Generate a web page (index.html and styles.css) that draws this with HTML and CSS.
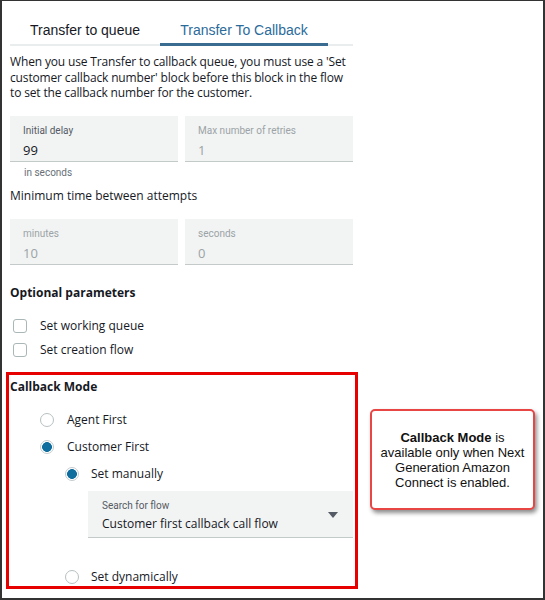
FILE: index.html
```html
<!DOCTYPE html>
<html>
<head>
<meta charset="utf-8">
<link rel="stylesheet" href="styles.css">
</head>
<body>
<div class="frame">
  <div class="panel">
    <div class="tabs">
      <div class="tab tab-queue">Transfer to queue</div>
      <div class="tab tab-callback active">Transfer To Callback</div>
    </div>
    <p class="desc">When you use Transfer to callback queue, you must use a 'Set customer callback number' block before this block in the flow to set the callback number for the customer.</p>

    <div class="row row-first">
      <div class="field">
        <div class="field-label">Initial delay</div>
        <div class="field-value">99</div>
      </div>
      <div class="field disabled">
        <div class="field-label">Max number of retries</div>
        <div class="field-value">1</div>
      </div>
    </div>
    <div class="hint">in seconds</div>

    <div class="subhead">Minimum time between attempts</div>
    <div class="row row-second">
      <div class="field disabled">
        <div class="field-label">minutes</div>
        <div class="field-value">10</div>
      </div>
      <div class="field disabled">
        <div class="field-label">seconds</div>
        <div class="field-value">0</div>
      </div>
    </div>

    <div class="section-title optional">Optional parameters</div>
    <div class="checks">
      <label class="check"><span class="box"></span><span>Set working queue</span></label>
      <label class="check"><span class="box"></span><span>Set creation flow</span></label>
    </div>

    <div class="callback">
      <div class="section-title">Callback Mode</div>
      <div class="radios">
        <div class="radio"><span class="dot"></span><span>Agent First</span></div>
        <div class="radio"><span class="dot on"></span><span>Customer First</span></div>
        <div class="radio nested"><span class="dot on"></span><span>Set manually</span></div>
      </div>
      <div class="select">
        <div class="select-text">
          <div class="field-label">Search for flow</div>
          <div class="select-value">Customer first callback call flow</div>
        </div>
        <svg class="caret" width="10" height="6" viewBox="0 0 10 6"><path d="M0 0 L10 0 L5 6 Z" fill="#545b64"/></svg>
      </div>
      <div class="radio nested last"><span class="dot"></span><span>Set dynamically</span></div>
    </div>
  </div>

  <div class="note">
    <div class="note-text">
      <div><b>Callback Mode</b> is</div>
      <div>available only when Next</div>
      <div>Generation Amazon</div>
      <div>Connect is enabled.</div>
    </div>
  </div>
</div>
</body>
</html>
```

FILE: styles.css
```css
* { box-sizing: border-box; }
html, body { margin: 0; padding: 0; background: #fff; }
body { font-family: "Open Sans", "Noto Sans", sans-serif; color: #16191f; }

.frame {
  position: relative;
  width: 545px;
  height: 600px;
  border: 2px solid #333;
  border-top-width: 1px;
  background: #fff;
  overflow: hidden;
}

.panel {
  margin-left: 8px;
  width: 343px;
}

.tabs {
  display: flex;
  margin-top: 15px;
  border-bottom: 2px solid #eaeded;
}
.tab {
  font-family: "Liberation Sans", Arial, sans-serif;
  font-size: 14px;
  line-height: 18px;
  padding: 5px 0 4px;
  margin-bottom: -2px;
  text-align: center;
  color: #16191f;
  border-bottom: 3px solid transparent;
}
.tab-queue { width: 150px; }
.tab-callback { width: 168px; }
.tab.active { color: #2b6b9b; border-bottom-color: #3a6c91; }

.desc {
  margin: 8px 0 0;
  font-size: 12px;
  line-height: 15.5px;
  letter-spacing: -0.15px;
}

.row {
  display: flex;
  gap: 7px;
}
.row-first { margin-top: 15px; }
.row-second { margin-top: 15px; }

.field {
  width: 168px;
  height: 46px;
  background: #f2f3f3;
  border-bottom: 1px solid #c4c9ca;
  padding: 9px 13px 0;
}
.field-label {
  font-family: Roboto, "Liberation Sans", sans-serif;
  font-size: 10px;
  line-height: 12px;
  color: #545b64;
}
.field-value {
  margin-top: 3px;
  font-size: 13px;
  line-height: 20px;
}
.disabled .field-label, .disabled .field-value { color: #9ba3a6; }

.hint {
  margin-top: 4px;
  padding-left: 14px;
  font-family: Roboto, "Liberation Sans", sans-serif;
  font-size: 10px;
  line-height: 14px;
  color: #687078;
}

.subhead {
  margin-top: 8px;
  font-size: 12px;
  line-height: 16px;
}

.section-title {
  font-size: 12px;
  font-weight: 700;
  line-height: 16px;
}
.optional { margin-top: 20px; }

.checks {
  margin-top: 16px;
  display: flex;
  flex-direction: column;
  gap: 6px;
}
.check {
  display: flex;
  align-items: center;
  gap: 13px;
  padding-left: 3px;
  font-size: 12px;
  line-height: 18px;
}
.box {
  width: 14px;
  height: 14px;
  border: 1px solid #aab7b8;
  border-radius: 3px;
  background: #fff;
}

.callback {
  margin: 13px -5px 0 -4px;
  height: 217px;
  border: 3px solid #e60000;
  padding: 4px 0 0 1px;
}

.radios {
  margin-top: 16px;
  display: flex;
  flex-direction: column;
  gap: 9px;
}
.radio {
  display: flex;
  align-items: center;
  gap: 13px;
  padding-left: 30px;
  font-size: 12px;
  line-height: 18px;
}
.radio.nested { padding-left: 55px; gap: 12px; }
.radio.last { margin-top: 30px; }
.dot {
  width: 14px;
  height: 14px;
  border-radius: 50%;
  border: 1px solid #b8c0c2;
  background: #fff;
  flex: none;
}
.dot.on {
  background: radial-gradient(circle, #0f6e9e 0 4.6px, #fff 5.2px);
  border-color: #c5cbcd;
}

.select {
  margin: 8px 0 0 78px;
  width: 265px;
  height: 47px;
  background: #f2f3f3;
  border-bottom: 1px solid #c4c9ca;
  padding: 9px 14px 0;
  display: flex;
  justify-content: space-between;
}
.select-value {
  margin-top: 2px;
  font-size: 12px;
  line-height: 20px;
}
.caret { margin-top: 12px; margin-right: 1px; }

.note {
  position: absolute;
  left: 368px;
  top: 408px;
  width: 165px;
  height: 101px;
  border: 2px solid #e84545;
  border-radius: 5px;
  box-shadow: 2px 3px 4px rgba(0,0,0,0.45);
  background: #fff;
  display: flex;
  align-items: center;
  justify-content: center;
  padding: 0 2px;
}
.note-text {
  text-align: center;
  font-family: "Liberation Sans", Arial, sans-serif;
  font-size: 13px;
  line-height: 15px;
  color: #111;
}
```
